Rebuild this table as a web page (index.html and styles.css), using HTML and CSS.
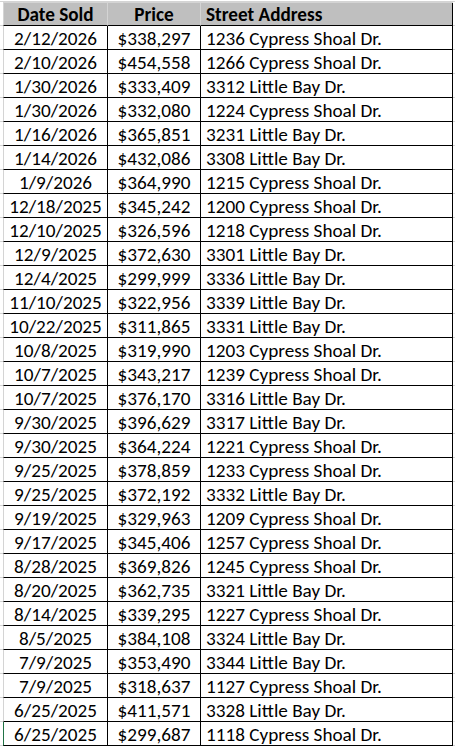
FILE: index.html
```html
<!DOCTYPE html>
<html lang="en">
<head>
<meta charset="utf-8">
<title>Home Sales</title>
<link rel="stylesheet" href="styles.css">
</head>
<body>
<div class="sheet">
<table class="sales">
<thead>
<tr><th class="c-date">Date Sold</th><th class="c-price">Price</th><th class="c-addr">Street Address</th></tr>
</thead>
<tbody>
<tr><td class="c-date">2/12/2026</td><td class="c-price">$338,297</td><td class="c-addr">1236 Cypress Shoal Dr.</td></tr>
<tr><td class="c-date">2/10/2026</td><td class="c-price">$454,558</td><td class="c-addr">1266 Cypress Shoal Dr.</td></tr>
<tr><td class="c-date">1/30/2026</td><td class="c-price">$333,409</td><td class="c-addr">3312 Little Bay Dr.</td></tr>
<tr><td class="c-date">1/30/2026</td><td class="c-price">$332,080</td><td class="c-addr">1224 Cypress Shoal Dr.</td></tr>
<tr><td class="c-date">1/16/2026</td><td class="c-price">$365,851</td><td class="c-addr">3231 Little Bay Dr.</td></tr>
<tr><td class="c-date">1/14/2026</td><td class="c-price">$432,086</td><td class="c-addr">3308 Little Bay Dr.</td></tr>
<tr><td class="c-date">1/9/2026</td><td class="c-price">$364,990</td><td class="c-addr">1215 Cypress Shoal Dr.</td></tr>
<tr><td class="c-date">12/18/2025</td><td class="c-price">$345,242</td><td class="c-addr">1200 Cypress Shoal Dr.</td></tr>
<tr><td class="c-date">12/10/2025</td><td class="c-price">$326,596</td><td class="c-addr">1218 Cypress Shoal Dr.</td></tr>
<tr><td class="c-date">12/9/2025</td><td class="c-price">$372,630</td><td class="c-addr">3301 Little Bay Dr.</td></tr>
<tr><td class="c-date">12/4/2025</td><td class="c-price">$299,999</td><td class="c-addr">3336 Little Bay Dr.</td></tr>
<tr><td class="c-date">11/10/2025</td><td class="c-price">$322,956</td><td class="c-addr">3339 Little Bay Dr.</td></tr>
<tr><td class="c-date">10/22/2025</td><td class="c-price">$311,865</td><td class="c-addr">3331 Little Bay Dr.</td></tr>
<tr><td class="c-date">10/8/2025</td><td class="c-price">$319,990</td><td class="c-addr">1203 Cypress Shoal Dr.</td></tr>
<tr><td class="c-date">10/7/2025</td><td class="c-price">$343,217</td><td class="c-addr">1239 Cypress Shoal Dr.</td></tr>
<tr><td class="c-date">10/7/2025</td><td class="c-price">$376,170</td><td class="c-addr">3316 Little Bay Dr.</td></tr>
<tr><td class="c-date">9/30/2025</td><td class="c-price">$396,629</td><td class="c-addr">3317 Little Bay Dr.</td></tr>
<tr><td class="c-date">9/30/2025</td><td class="c-price">$364,224</td><td class="c-addr">1221 Cypress Shoal Dr.</td></tr>
<tr><td class="c-date">9/25/2025</td><td class="c-price">$378,859</td><td class="c-addr">1233 Cypress Shoal Dr.</td></tr>
<tr><td class="c-date">9/25/2025</td><td class="c-price">$372,192</td><td class="c-addr">3332 Little Bay Dr.</td></tr>
<tr><td class="c-date">9/19/2025</td><td class="c-price">$329,963</td><td class="c-addr">1209 Cypress Shoal Dr.</td></tr>
<tr><td class="c-date">9/17/2025</td><td class="c-price">$345,406</td><td class="c-addr">1257 Cypress Shoal Dr.</td></tr>
<tr><td class="c-date">8/28/2025</td><td class="c-price">$369,826</td><td class="c-addr">1245 Cypress Shoal Dr.</td></tr>
<tr><td class="c-date">8/20/2025</td><td class="c-price">$362,735</td><td class="c-addr">3321 Little Bay Dr.</td></tr>
<tr><td class="c-date">8/14/2025</td><td class="c-price">$339,295</td><td class="c-addr">1227 Cypress Shoal Dr.</td></tr>
<tr><td class="c-date">8/5/2025</td><td class="c-price">$384,108</td><td class="c-addr">3324 Little Bay Dr.</td></tr>
<tr><td class="c-date">7/9/2025</td><td class="c-price">$353,490</td><td class="c-addr">3344 Little Bay Dr.</td></tr>
<tr><td class="c-date">7/9/2025</td><td class="c-price">$318,637</td><td class="c-addr">1127 Cypress Shoal Dr.</td></tr>
<tr><td class="c-date">6/25/2025</td><td class="c-price">$411,571</td><td class="c-addr">3328 Little Bay Dr.</td></tr>
<tr class="active"><td class="c-date">6/25/2025</td><td class="c-price">$299,687</td><td class="c-addr">1118 Cypress Shoal Dr.</td></tr>
</tbody>
</table>
</div>
</body>
</html>
```
FILE: styles.css
```css
html, body {
  margin: 0;
  padding: 0;
}
body {
  background-color: #ffffff;
  background-image: repeating-linear-gradient(to bottom, transparent 0, transparent 1px, #d4d4d4 1px, #d4d4d4 2px, transparent 2px, transparent 24px);
  font-family: Carlito, Calibri, "Liberation Sans", sans-serif;
  font-size: 19.2px;
  color: #000;
  height: 748px;
  overflow: hidden;
}
.sheet {
  padding: 2px 0 0 3px;
}
.sales {
  border-collapse: separate;
  border-spacing: 0;
  border-top: 1px solid #d4d4d4;
  background: #fff;
}
.sales th, .sales td {
  padding: 0;
  white-space: nowrap;
  box-sizing: content-box;
  overflow: hidden;
  vertical-align: top;
}
.sales th {
  background: #bfbfbf;
  font-weight: bold;
  height: 20px;
  line-height: 20px;
  padding-top: 2px;
  border-bottom: 1px solid #000;
  border-right: 1px solid #d4d4d4;
  text-align: center;
}
.sales td {
  height: 21px;
  line-height: 21px;
  padding-top: 2px;
  border-bottom: 1px solid #000;
  border-right: 1px solid #000;
  text-align: center;
}
.sales th:first-child, .sales td:first-child {
  border-left: 1px solid #d4d4d4;
}
.sales tr.active td:first-child {
  border-left-color: #217346;
}
.sales .c-date { width: 103px; }
.sales .c-price { width: 92px; }
.sales .c-addr {
  width: 246px;
  padding-left: 5px;
  text-align: left;
}
.sales th.c-addr {
  border-right-color: #000;
}
```
